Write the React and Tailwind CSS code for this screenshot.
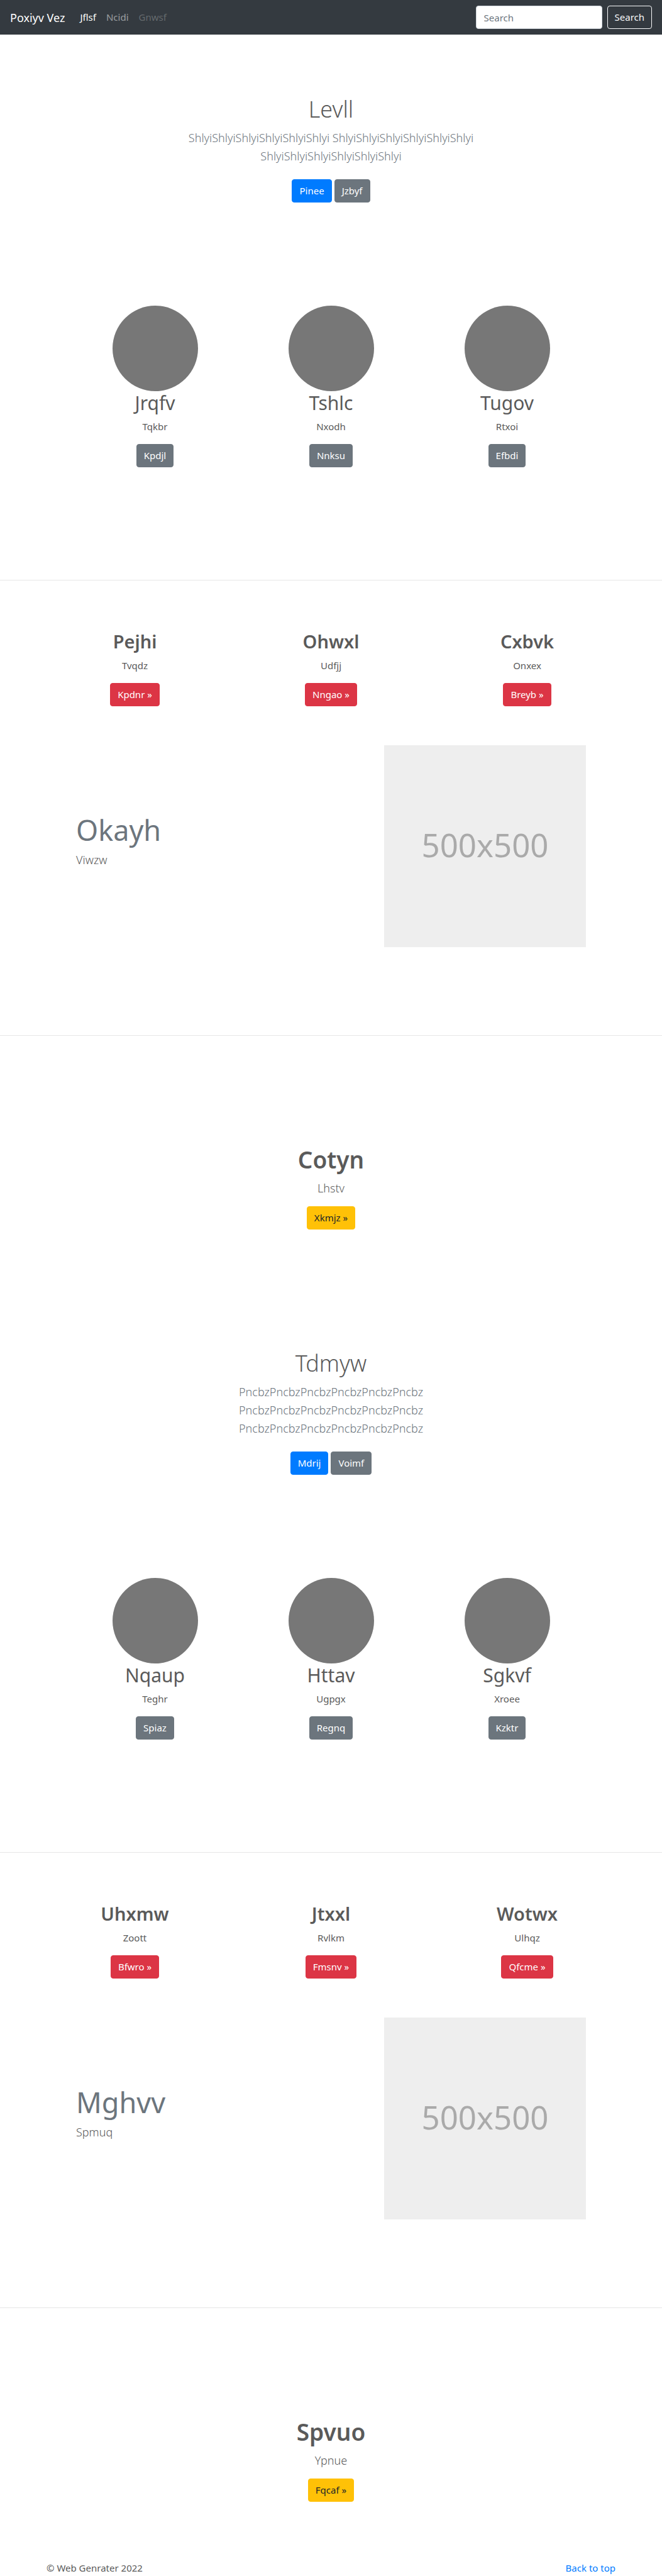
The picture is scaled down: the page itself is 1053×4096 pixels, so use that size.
import React from "react";

const buttonColors = {
  primary: "border-[#007bff] bg-[#007bff] text-white",
  secondary: "border-[#6c757d] bg-[#6c757d] text-white",
  danger: "border-[#dc3545] bg-[#dc3545] text-white",
  warning: "border-[#ffc107] bg-[#ffc107] text-[#212529]",
  outline: "border-[#f8f9fa] bg-transparent text-[#f8f9fa]",
};

function Button({ color, children, type = "button" }) {
  return (
    <button
      type={type}
      className={`h-[37px] cursor-pointer rounded border px-[11px] text-[15px] leading-[23px] whitespace-nowrap ${buttonColors[color]}`}
    >
      {children}
    </button>
  );
}

function Navbar() {
  return (
    <nav className="flex h-[55px] items-center bg-[#343a40] px-4">
      <a href="#" className="mr-6 text-[18px] leading-7 text-white">
        Poxiyv Vez
      </a>
      <ul className="flex gap-4 text-[15px] leading-[23px]">
        <li>
          <a href="#" className="text-white">Jflsf</a>
        </li>
        <li>
          <a href="#" className="text-white/50">Ncidi</a>
        </li>
        <li>
          <a href="#" aria-disabled="true" className="text-white/25">Gnwsf</a>
        </li>
      </ul>
      <form className="ml-auto flex gap-2">
        <input
          type="text"
          placeholder="Search"
          aria-label="Search"
          className="h-[37px] w-[201px] rounded border border-[#ced4da] bg-white px-3 text-[15px] text-[#495057] placeholder:text-[#6c757d]"
        />
        <Button color="outline">Search</Button>
      </form>
    </nav>
  );
}

function Hero({ title, lines, primary, secondary }) {
  return (
    <section className="px-4 text-center">
      <h1 className="text-[36px] leading-[47px] font-light">{title}</h1>
      <p className="mt-2 text-[18px] leading-[29px] font-light text-[#6c757d]">
        {lines.map((line, i) => (
          <span key={i} className="block">{line}</span>
        ))}
      </p>
      <div className="mt-[22px] flex justify-center gap-1">
        <Button color="primary">{primary}</Button>
        <Button color="secondary">{secondary}</Button>
      </div>
    </section>
  );
}

function Circles({ items }) {
  return (
    <section className="mx-auto mt-[164px] grid max-w-[840px] grid-cols-3">
      {items.map(([title, text, action]) => (
        <div key={title} className="flex flex-col items-center">
          <div className="size-[136px] rounded-full bg-[#777777]" />
          <h2 className="text-[30px] leading-[38px]">{title}</h2>
          <p className="mt-[7px] mb-4 text-[15px] leading-[23px]">{text}</p>
          <Button color="secondary">{action}</Button>
        </div>
      ))}
    </section>
  );
}

function Columns({ items }) {
  return (
    <section className="mx-auto mt-[78px] grid max-w-[936px] grid-cols-3">
      {items.map(([title, text, action]) => (
        <div key={title} className="flex flex-col items-center">
          <h2 className="text-[29px] leading-[38px] font-semibold">{title}</h2>
          <p className="mt-2 mb-4 text-[15px] leading-[23px]">{text}</p>
          <Button color="danger">{action} »</Button>
        </div>
      ))}
    </section>
  );
}

function Featurette({ title, text }) {
  return (
    <section className="mx-auto mt-[62px] flex max-w-[811px] items-center justify-between">
      <div className="pb-[18px]">
        <h2 className="text-[45px] leading-[58px] text-[#6c757d]">{title}</h2>
        <p className="mt-1 text-[18px] leading-[29px] font-light">{text}</p>
      </div>
      <div className="flex size-[321px] items-center justify-center bg-[#eeeeee] pb-1 text-[51px] text-[#aaaaaa]">
        500x500
      </div>
    </section>
  );
}

function Callout({ title, text, action }) {
  return (
    <section className="mt-[173px] flex flex-col items-center">
      <h2 className="text-[37px] leading-[47px] font-semibold">{title}</h2>
      <p className="mt-2 mb-3.5 text-[18px] leading-[29px] font-light">{text}</p>
      <Button color="warning">{action} »</Button>
    </section>
  );
}

function Page({ hero, circles, columns, featurette, callout }) {
  return (
    <>
      <Hero {...hero} />
      <Circles items={circles} />
      <hr className="mt-[179px] border-[#e6e6e6]" />
      <Columns items={columns} />
      <Featurette {...featurette} />
      <hr className="mt-[140px] border-[#e6e6e6]" />
      <Callout {...callout} />
    </>
  );
}

const first = {
  hero: {
    title: "Levll",
    lines: [
      "ShlyiShlyiShlyiShlyiShlyiShlyi ShlyiShlyiShlyiShlyiShlyiShlyi",
      "ShlyiShlyiShlyiShlyiShlyiShlyi",
    ],
    primary: "Pinee",
    secondary: "Jzbyf",
  },
  circles: [
    ["Jrqfv", "Tqkbr", "Kpdjl"],
    ["Tshlc", "Nxodh", "Nnksu"],
    ["Tugov", "Rtxoi", "Efbdi"],
  ],
  columns: [
    ["Pejhi", "Tvqdz", "Kpdnr"],
    ["Ohwxl", "Udfjj", "Nngao"],
    ["Cxbvk", "Onxex", "Breyb"],
  ],
  featurette: { title: "Okayh", text: "Viwzw" },
  callout: { title: "Cotyn", text: "Lhstv", action: "Xkmjz" },
};

const second = {
  hero: {
    title: "Tdmyw",
    lines: [
      "PncbzPncbzPncbzPncbzPncbzPncbz",
      "PncbzPncbzPncbzPncbzPncbzPncbz",
      "PncbzPncbzPncbzPncbzPncbzPncbz",
    ],
    primary: "Mdrij",
    secondary: "Voimf",
  },
  circles: [
    ["Nqaup", "Teghr", "Spiaz"],
    ["Httav", "Ugpgx", "Regnq"],
    ["Sgkvf", "Xroee", "Kzktr"],
  ],
  columns: [
    ["Uhxmw", "Zoott", "Bfwro"],
    ["Jtxxl", "Rvlkm", "Fmsnv"],
    ["Wotwx", "Ulhqz", "Qfcme"],
  ],
  featurette: { title: "Mghvv", text: "Spmuq" },
  callout: { title: "Spvuo", text: "Ypnue", action: "Fqcaf" },
};

export default function App() {
  return (
    <div className="bg-white font-['Noto_Sans','Open_Sans',sans-serif] text-[#5a5a5a]">
      <Navbar />
      <main className="flex flex-col gap-[189px] pt-[95px]">
        <div>
          <Page {...first} />
        </div>
        <div>
          <Page {...second} />
        </div>
      </main>
      <footer className="mt-[94px] flex justify-between px-[74px] text-[15px] leading-[23px]">
        <p>© Web Genrater 2022</p>
        <a href="#" className="text-[#007bff]">Back to top</a>
      </footer>
    </div>
  );
}
